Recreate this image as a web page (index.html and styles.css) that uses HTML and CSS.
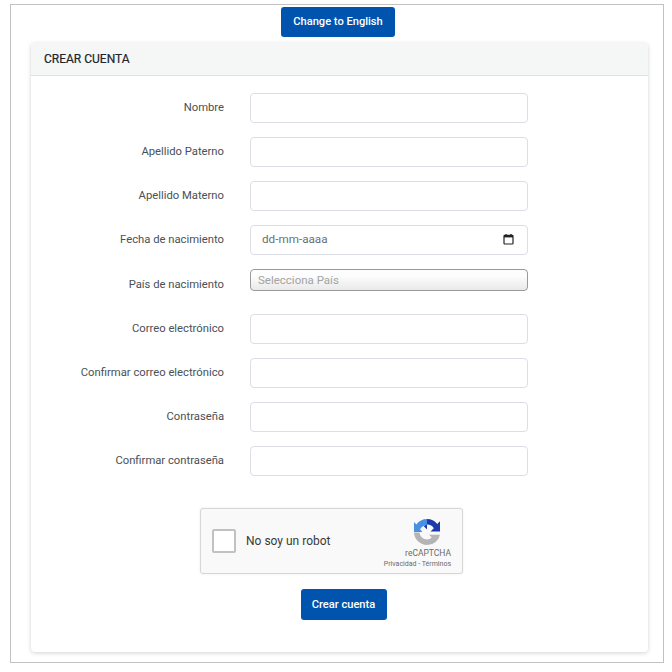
FILE: index.html
```html
<!DOCTYPE html>
<html lang="es">
<head>
<meta charset="utf-8">
<title>Crear cuenta</title>
<link rel="stylesheet" href="styles.css">
</head>
<body>
<div class="frame">
  <div class="lang"><button class="btn lang-btn" type="button">Change to English</button></div>
  <section class="card">
    <header class="card-head">CREAR CUENTA</header>
    <form class="card-body">
      <div class="row"><label class="lbl">Nombre</label><div class="field"></div></div>
      <div class="row"><label class="lbl">Apellido Paterno</label><div class="field"></div></div>
      <div class="row"><label class="lbl">Apellido Materno</label><div class="field"></div></div>
      <div class="row"><label class="lbl">Fecha de nacimiento</label>
        <div class="field date"><span>dd-mm-aaaa</span>
          <svg class="cal" width="11" height="11" viewBox="0 0 11 11"><path d="M3 0v1.5M8 0v1.5" stroke="#222" stroke-width="1.3" fill="none"/><rect x="1" y="1.4" width="9" height="8.6" rx=".8" fill="none" stroke="#222" stroke-width="1.2"/><rect x="1" y="1.4" width="9" height="2" fill="#222"/></svg>
        </div>
      </div>
      <div class="row row-select"><label class="lbl">País de nacimiento</label><div class="select">Selecciona País</div></div>
      <div class="row"><label class="lbl">Correo electrónico</label><div class="field"></div></div>
      <div class="row"><label class="lbl">Confirmar correo electrónico</label><div class="field"></div></div>
      <div class="row"><label class="lbl">Contraseña</label><div class="field"></div></div>
      <div class="row"><label class="lbl">Confirmar contraseña</label><div class="field"></div></div>
      <div class="captcha">
        <span class="check"></span>
        <span class="robot">No soy un robot</span>
        <div class="brand">
          <svg class="logo" width="28" height="28" viewBox="0 0 28 28">
            <path d="M14 1A13 13 0 0 0 3.4 6.5L1 4V14H9.5L7 11.2A7.5 7.5 0 0 1 11.5 7.4L14 9.5Z" fill="#4a90e2"/>
            <path d="M14 1A13 13 0 0 1 24.2 6L27 3.2V13.5H17.5L20.8 10.2A7.5 7.5 0 0 0 14 6.5L10.8 8.2 14 11.5Z" fill="#1c3aa9"/>
            <path d="M1 14.5H6.5A7.5 7.5 0 0 0 14 21.5 7.5 7.5 0 0 0 18.8 19.5L16 16.8H27A13 13 0 0 1 14 27 13 13 0 0 1 1 14.5Z" fill="#b4b4b4"/>
          </svg>
          <span class="re">reCAPTCHA</span>
          <span class="terms">Privacidad - Términos</span>
        </div>
      </div>
      <div class="submit"><button class="btn submit-btn" type="button">Crear cuenta</button></div>
    </form>
  </section>
</div>
</body>
</html>
```
FILE: styles.css
```css
* { box-sizing: border-box; }
html, body { margin: 0; padding: 0; background: #fff; }
body { font-family: Roboto, "Liberation Sans", sans-serif; font-size: 11.25px; color: #4a5056; }
.frame {
  width: 654px; height: 659px; margin: 4px 0 0 10px;
  border: 1px solid #c2c2c2;
  padding: 2px 15px 0 20px;
  display: flex; flex-direction: column;
}
.lang { display: flex; justify-content: center; height: 36px; padding-right: 3px; }
.btn {
  border: 0; background: #0054ae; color: #fff; border-radius: 3px;
  font: 500 11.1px Roboto, "Liberation Sans", sans-serif; padding: 0 0 2px;
}
.lang-btn { width: 114px; height: 30px; }
.card {
  width: 617px; height: 609px; border-radius: 4px; background: #fff;
  box-shadow: 0 1px 4px rgba(0,0,0,.18);
  display: flex; flex-direction: column;
}
.card-head {
  height: 33px; flex: none; background: #f5f7f7; border-bottom: 1px solid #dfe1e3;
  border-radius: 4px 4px 0 0; padding: 0 13px; line-height: 32px;
  font-size: 12px; font-weight: 400; color: #20252c; -webkit-text-stroke: .2px #20252c;
}
.card-body { padding-top: 17px; display: flex; flex-direction: column; }
.row { display: flex; align-items: center; height: 30px; margin-bottom: 14px; }
.row-select { height: 22px; margin-bottom: 23px; }
.lbl { width: 193px; text-align: right; margin-right: 26px; padding-bottom: 1px; }
.row-select .lbl { padding: 8px 0 0; }
.field {
  width: 278px; height: 30px; background: #fff;
  border: 1px solid #dcdee5; border-radius: 4px;
}
.date { display: flex; align-items: center; justify-content: space-between; padding: 0 13px 2px 11px; color: #6a7076; font-size: 11.7px; }
.cal { display: block; }
.select {
  width: 278px; height: 22px; border: 1px solid #9a9a9a; border-radius: 4px;
  background: linear-gradient(#fdfdfd 30%, #e9e9e9);
  color: #a3a3a3; padding: 0 7px; line-height: 20px; font-size: 11.5px;
}
.captcha {
  width: 263px; height: 66px; margin: 18px 0 0 169px;
  background: #f9f9f9; border: 1px solid #d6d6d6; border-radius: 3px;
  box-shadow: 0 0 3px rgba(0,0,0,.07);
  display: flex; align-items: center; position: relative;
}
.check {
  width: 24px; height: 24px; margin-left: 11px; background: #fff;
  border: 2px solid #c1c1c1; border-radius: 2px;
}
.robot { margin-left: 10px; font-size: 12px; color: #3a3a3a; }
.brand {
  position: absolute; right: 11px; top: 9px;
  display: flex; flex-direction: column; align-items: flex-end;
  color: #555;
}
.logo { display: block; margin: 0 10px 2px 0; }
.re { font-size: 8.5px; line-height: 11px; color: #6b6b6b; }
.terms { font-size: 7px; line-height: 11px; white-space: nowrap; color: #6a6a6a; }
.submit { display: flex; justify-content: center; margin-top: 15px; padding-left: 8px; }
.submit-btn { width: 86px; height: 31px; padding: 0; }
```
